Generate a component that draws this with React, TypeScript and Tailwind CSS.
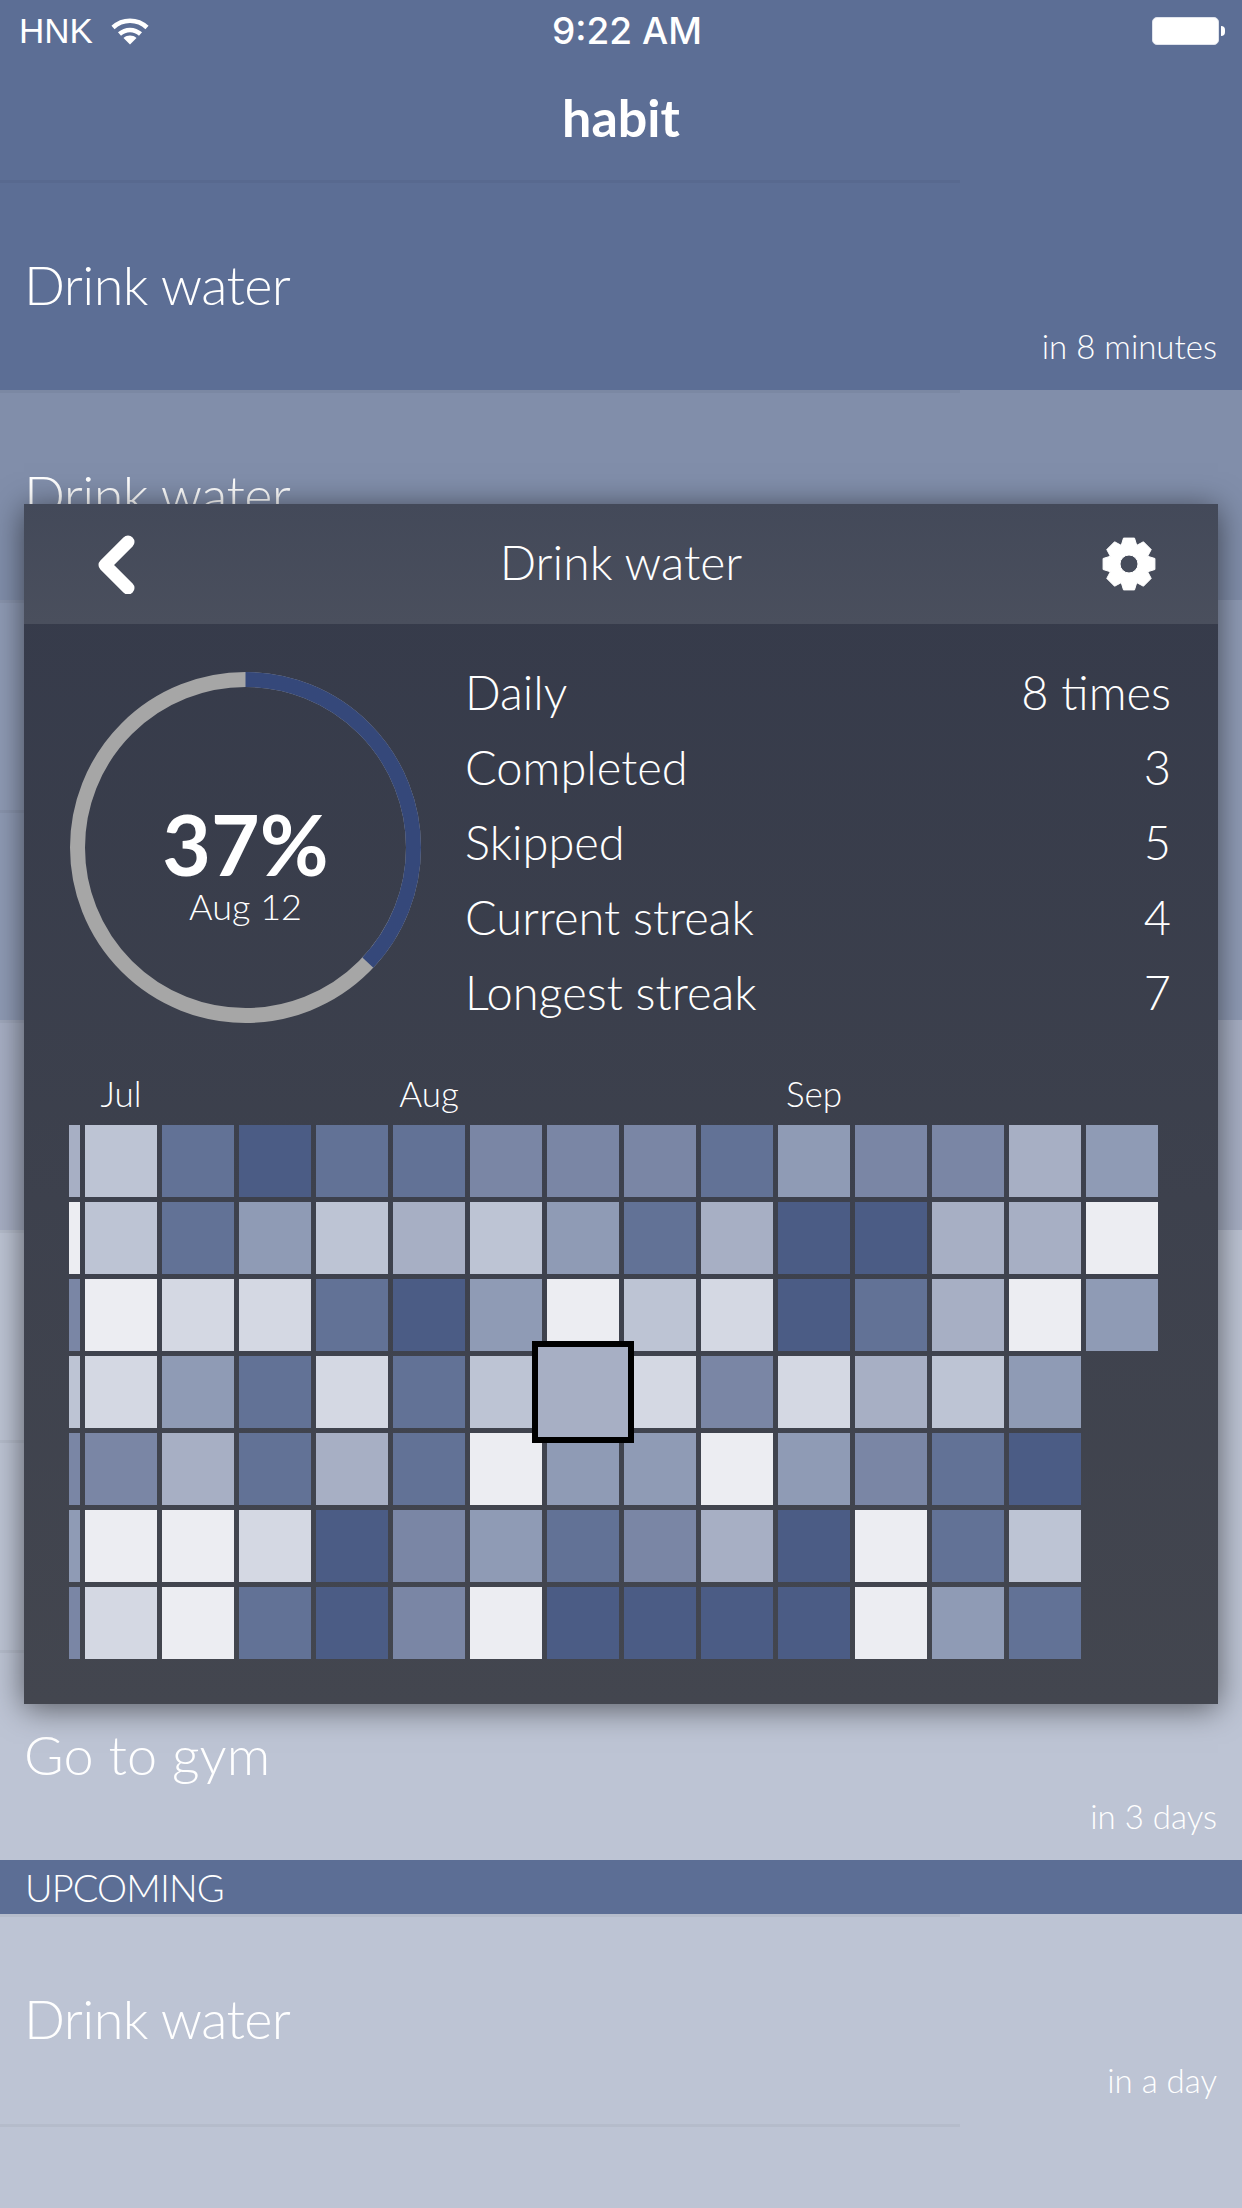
import type { ReactNode } from 'react';

const levels = ['', 'bg-[#4b5c85]', 'bg-[#627296]', 'bg-[#7a86a5]', 'bg-[#8f9bb5]', 'bg-[#a7afc4]', 'bg-[#bdc4d4]', 'bg-[#d4d8e3]', 'bg-[#ecedf2]'];

// first value of each row is the cut off column on the left, 0 is an empty day
const calendar = [
  [5, 6, 2, 1, 2, 2, 3, 3, 3, 2, 4, 3, 3, 5, 4],
  [8, 6, 2, 4, 6, 5, 6, 4, 2, 5, 1, 1, 5, 5, 8],
  [3, 8, 7, 7, 2, 1, 4, 8, 6, 7, 1, 2, 5, 8, 4],
  [6, 7, 4, 2, 7, 2, 6, 5, 7, 3, 7, 5, 6, 4, 0],
  [3, 3, 5, 2, 5, 2, 8, 4, 4, 8, 4, 3, 2, 1, 0],
  [4, 8, 8, 7, 1, 3, 4, 2, 3, 5, 1, 8, 2, 6, 0],
  [3, 7, 8, 2, 1, 3, 8, 1, 1, 1, 1, 8, 4, 2, 0],
];

const months = [
  { label: 'Jul', col: 'col-start-2' },
  { label: 'Aug', col: 'col-start-6' },
  { label: 'Sep', col: 'col-start-11' },
];

const stats = [
  ['Daily', '8 times'],
  ['Completed', '3'],
  ['Skipped', '5'],
  ['Current streak', '4'],
  ['Longest streak', '7'],
];

function HabitRow({ title, time, bg }: { title?: ReactNode; time?: string; bg: string }) {
  return (
    <div className={`h-[210px] ${bg}`}>
      <div className="h-[3px] w-[960px] bg-black/4" />
      {title && <div className="pl-[24px] pt-[69px] text-[54px] leading-[66px] tracking-[-0.6px] font-light text-white">{title}</div>}
      {time && <div className="pr-[25px] pt-[8px] text-right text-[33px] leading-[40px] font-light text-white">{time}</div>}
    </div>
  );
}

function Wifi() {
  return (
    <svg width="38" height="28" viewBox="0 0 38 28" fill="none" stroke="white" strokeWidth="4.5">
      <path d="M2 10.5C11.5 1.5 26.5 1.5 36 10.5" />
      <path d="M8.5 17C14.5 11.5 23.5 11.5 29.5 17" />
      <path d="M12.5 21L19 27.5L25.5 21C21.5 17.8 16.5 17.8 12.5 21Z" fill="white" stroke="none" />
    </svg>
  );
}

function Gear() {
  // eight flat teeth around a round hole
  const point = (r: number, deg: number) => {
    const a = (deg * Math.PI) / 180;
    return `${(27 + r * Math.cos(a)).toFixed(2)} ${(27 + r * Math.sin(a)).toFixed(2)}`;
  };
  const teeth = Array.from({ length: 8 }, (_, i) => {
    const a = i * 45;
    return `L${point(20, a - 23)}L${point(26.5, a - 12)}L${point(26.5, a + 12)}L${point(20, a + 23)}`;
  }).join('');
  const body = `M${teeth.slice(1)}Z`;
  return (
    <svg width="54" height="54" viewBox="0 0 54 54">
      <path
        fillRule="evenodd"
        fill="white"
        stroke="white"
        strokeLinejoin="round"
        d={`${body}M36 27A9 9 0 1 0 18 27A9 9 0 1 0 36 27Z`}
      />
    </svg>
  );
}

function Ring() {
  const r = 168;
  const c = 2 * Math.PI * r;
  return (
    <div className="relative h-[351px] w-[351px] shrink-0">
      <svg width="351" height="351" viewBox="0 0 351 351" fill="none" strokeWidth="15">
        <circle cx="175.5" cy="175.5" r={r} stroke="#a6a6a6" />
        <circle cx="175.5" cy="175.5" r={r} stroke="#35487a" strokeDasharray={`${c * 0.37} ${c}`} transform="rotate(-90 175.5 175.5)" />
      </svg>
      <div className="absolute inset-0 flex flex-col items-center justify-center pt-[40px] text-white">
        <div className="text-[84px] leading-[72px] font-bold">37%</div>
        <div className="mt-[5px] text-[36px] leading-[42px] font-light">Aug 12</div>
      </div>
    </div>
  );
}

function Modal() {
  return (
    <div className="absolute left-[24px] top-[504px] w-[1194px] h-[1200px] shadow-[0_4px_30px_rgba(0,0,0,0.55)] bg-linear-to-b from-[#353a4a] to-[#43464f] text-white">
      <div className="h-[120px] flex items-center justify-between pl-[72px] pr-[62px] bg-linear-to-b from-[#434959] to-[#4a4f5d]">
        <svg width="44" height="60" viewBox="0 0 44 60" fill="none" stroke="white" strokeWidth="13" strokeLinecap="round" strokeLinejoin="round">
          <path d="M32 8L9 31L32 54" />
        </svg>
        <div className="pb-[4px] text-[48px] leading-[60px] font-light">Drink water</div>
        <Gear />
      </div>

      <div className="pl-[45px] pt-[48px]">
        <div className="flex">
          <div className="ml-px">
            <Ring />
          </div>
          <div className="ml-[44px] mt-[-17px] w-[706px]">
            {stats.map(([name, value]) => (
              <div key={name} className="flex h-[75px] items-center justify-between text-[47px] font-light">
                <span>{name}</span>
                <span>{value}</span>
              </div>
            ))}
          </div>
        </div>

        <div className="mt-[43px] h-[52px] grid grid-cols-[11px_repeat(14,72px)] gap-x-[5px] text-[35px] font-light leading-[40px]">
          {months.map((m) => (
            <div key={m.label} className={`${m.col} text-center`}>{m.label}</div>
          ))}
        </div>

        <div className="grid grid-cols-[11px_repeat(14,72px)] auto-rows-[72px] gap-[5px]">
          {calendar.map((row, y) =>
            row.map((level, x) => {
              const selected = y === 3 && x === 7;
              return (
                <div key={`${y}-${x}`} className={`relative ${levels[level]}`}>
                  {selected && <div className="absolute -inset-[15px] z-10 border-[6px] border-black bg-[#a7afc4]" />}
                </div>
              );
            })
          )}
        </div>
      </div>
    </div>
  );
}

export default function App() {
  return (
    <div className="relative h-[2208px] w-[1242px] overflow-hidden bg-[#bdc4d4] font-['Lato',sans-serif]">
      <div className="h-[180px] bg-[#5c6e95] text-white">
        <div className="h-[62px] flex items-center justify-between pl-[19px] pr-[17px] font-['Liberation_Sans',sans-serif] text-[35px]">
          <div className="w-[300px] flex items-center gap-[18px]">
            <span>HNK</span>
            <Wifi />
          </div>
          <span className="pl-[10px] font-['Inter',sans-serif] text-[37px] font-medium">9:22 AM</span>
          <div className="w-[300px] flex items-center justify-end gap-[2px]">
            <div className="h-[28px] w-[67px] rounded-[5px] border border-[#dfe3ec] bg-white" />
            <div className="h-[10px] w-[4px] rounded-r-full bg-white" />
          </div>
        </div>
        <div className="pt-[27px] text-center text-[52px] leading-[56px] font-bold">habit</div>
      </div>

      <HabitRow title="Drink water" time="in 8 minutes" bg="bg-[#5c6e95]" />
      <HabitRow title="Drink water" bg="bg-[#818eaa]" />
      <HabitRow bg="bg-[#8f9bb5]" />
      <HabitRow bg="bg-[#8f9bb5]" />
      <HabitRow bg="bg-[#a7afc4]" />
      <HabitRow bg="bg-[#bdc4d4]" />
      <HabitRow bg="bg-[#bdc4d4]" />
      <HabitRow title={<span className="tracking-[0.1px]">Go to gym</span>} time="in 3 days" bg="bg-[#bdc4d4]" />

      <div className="h-[54px] bg-[#5c6e95] pl-[25px] text-[38px] leading-[54px] tracking-[-0.9px] font-light text-white">UPCOMING</div>

      <HabitRow title="Drink water" time="in a day" bg="bg-[#bdc4d4]" />
      <HabitRow title="Drink water" bg="bg-[#bdc4d4]" />

      <Modal />
    </div>
  );
}
